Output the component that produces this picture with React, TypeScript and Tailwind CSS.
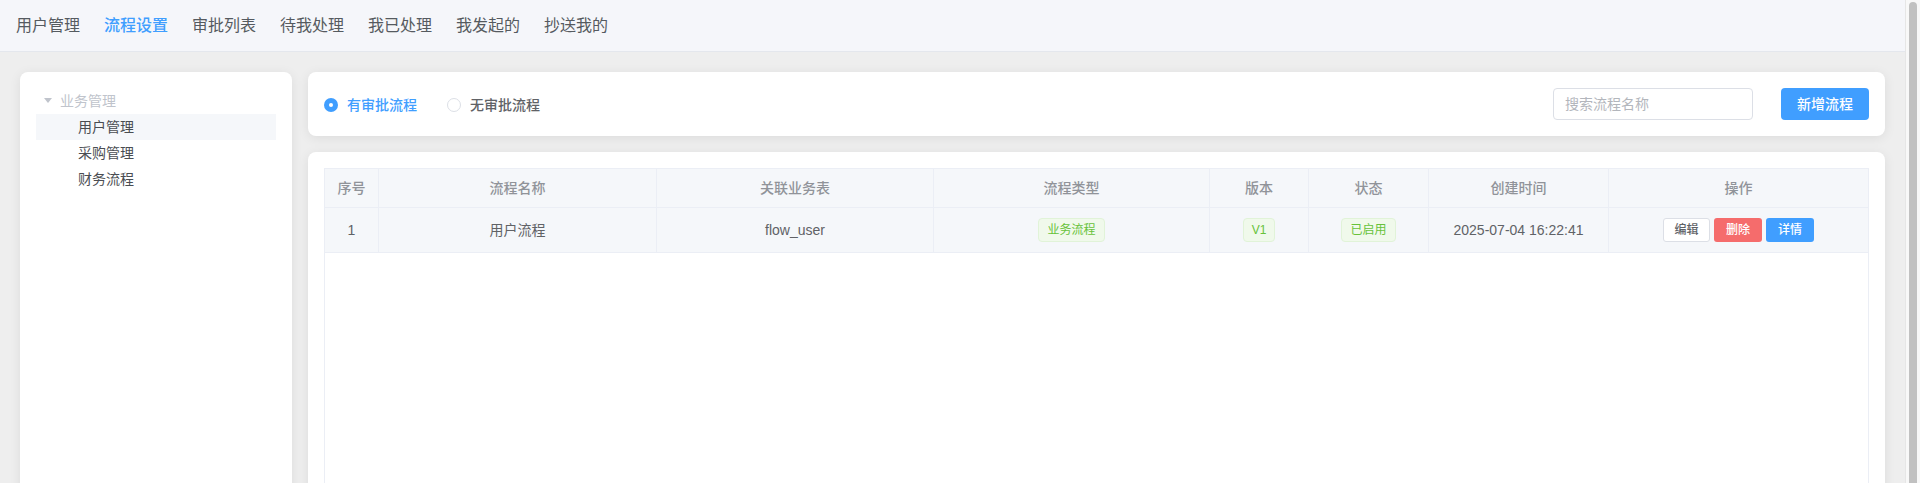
import React, { useState } from 'react';

const navItems = ['用户管理', '流程设置', '审批列表', '待我处理', '我已处理', '我发起的', '抄送我的'];

const columns = ['序号', '流程名称', '关联业务表', '流程类型', '版本', '状态', '创建时间', '操作'];

const rows = [
  { id: 1, name: '用户流程', table: 'flow_user', type: '业务流程', version: 'V1', status: '已启用', createdAt: '2025-07-04 16:22:41' },
];

const Tag: React.FC<{ children: React.ReactNode }> = ({ children }) => (
  <span className="inline-flex items-center h-[24px] px-[8px] rounded-[4px] border border-[#e1f3d8] bg-[#f0f9eb] text-[#67c23a] text-[12px] leading-none">
    {children}
  </span>
);

const Radio: React.FC<{ checked: boolean; label: string; onClick: () => void }> = ({ checked, label, onClick }) => (
  <label onClick={onClick} className="flex items-center cursor-pointer select-none">
    {checked ? (
      <span className="w-[14px] h-[14px] rounded-full bg-[#409eff] flex items-center justify-center">
        <span className="w-[4px] h-[4px] rounded-full bg-white" />
      </span>
    ) : (
      <span className="w-[14px] h-[14px] rounded-full border border-[#dcdfe6] bg-white" />
    )}
    <span className={`pl-[9px] text-[14px] font-medium leading-none ${checked ? 'text-[#409eff]' : 'text-[#606266]'}`}>{label}</span>
  </label>
);

export default function App() {
  const [mode, setMode] = useState<'with' | 'without'>('with');
  const [keyword, setKeyword] = useState('');

  return (
    <div
      className="h-screen overflow-hidden flex bg-[#eeeeee]"
      style={{ fontFamily: '"Liberation Sans", "Noto Sans CJK SC", sans-serif' }}
    >
      <div className="flex-1 flex flex-col min-w-0">
        {/* top nav */}
        <div className="h-[52px] shrink-0 bg-[#f5f6fa] border-b border-[#e4e7ed] flex items-center gap-6 pl-4 text-[16px] text-[#555a60]">
          {navItems.map((item) => (
            <span key={item} className={item === '流程设置' ? 'text-[#409eff] font-medium' : ''}>
              {item}
            </span>
          ))}
        </div>

        <div className="flex shrink-0 gap-4 p-5 h-[800px]">
          {/* tree */}
          <div className="w-[272px] shrink-0 bg-white rounded-[8px] shadow-[0_2px_12px_0_rgba(0,0,0,0.08)] p-4">
            <div className="h-[26px] flex items-center text-[14px] text-[#c0c4cc]">
              <span className="w-[24px] flex justify-center">
                <svg width="8" height="6" viewBox="0 0 8 6">
                  <path d="M0 0 L8 0 L4 5 Z" fill="#c0c4cc" />
                </svg>
              </span>
              业务管理
            </div>
            {['用户管理', '采购管理', '财务流程'].map((n, i) => (
              <div
                key={n}
                className={`h-[26px] flex items-center pl-[42px] text-[14px] text-[#4a4d52] ${i === 0 ? 'bg-[#f5f7fa]' : ''}`}
              >
                {n}
              </div>
            ))}
          </div>

          <div className="flex-1 flex flex-col gap-4 min-w-0">
            {/* filter bar */}
            <div className="h-[64px] shrink-0 bg-white rounded-[8px] shadow-[0_2px_12px_0_rgba(0,0,0,0.08)] px-4 flex items-center">
              <div className="flex items-center gap-[30px] pt-[1px]">
                <Radio checked={mode === 'with'} label="有审批流程" onClick={() => setMode('with')} />
                <Radio checked={mode === 'without'} label="无审批流程" onClick={() => setMode('without')} />
              </div>
              <div className="ml-auto flex items-center gap-[28px]">
                <input
                  value={keyword}
                  onChange={(e) => setKeyword(e.target.value)}
                  placeholder="搜索流程名称"
                  className="w-[200px] h-[32px] rounded-[4px] border border-[#dcdfe6] px-[11px] text-[14px] text-[#606266] placeholder:text-[#b3b6bc] outline-none"
                />
                <button className="w-[88px] h-[32px] rounded-[4px] bg-[#409eff] text-white text-[14px] font-medium">
                  新增流程
                </button>
              </div>
            </div>

            {/* table */}
            <div className="flex-1 bg-white rounded-[8px] shadow-[0_2px_12px_0_rgba(0,0,0,0.08)] p-4">
              <div className="h-full border border-[#ebeef5]">
                <div className="grid grid-cols-[54px_278px_277px_276px_99px_120px_180px_1fr] text-[14px]">
                  {columns.map((c, i) => (
                    <div
                      key={c}
                      className={`h-[39px] flex items-center justify-center bg-[#f5f7fa] border-b border-[#ebeef5] text-[#909399] font-medium ${i < columns.length - 1 ? 'border-r' : ''}`}
                    >
                      {c}
                    </div>
                  ))}
                  {rows.map((r) => (
                    <React.Fragment key={r.id}>
                      <div className="h-[45px] flex items-center justify-center bg-[#f5f7fa] border-b border-r border-[#ebeef5] text-[#606266]">{r.id}</div>
                      <div className="h-[45px] flex items-center justify-center bg-[#f5f7fa] border-b border-r border-[#ebeef5] text-[#606266]">{r.name}</div>
                      <div className="h-[45px] flex items-center justify-center bg-[#f5f7fa] border-b border-r border-[#ebeef5] text-[#606266]">{r.table}</div>
                      <div className="h-[45px] flex items-center justify-center bg-[#f5f7fa] border-b border-r border-[#ebeef5]">
                        <Tag>{r.type}</Tag>
                      </div>
                      <div className="h-[45px] flex items-center justify-center bg-[#f5f7fa] border-b border-r border-[#ebeef5]">
                        <Tag>{r.version}</Tag>
                      </div>
                      <div className="h-[45px] flex items-center justify-center bg-[#f5f7fa] border-b border-r border-[#ebeef5]">
                        <Tag>{r.status}</Tag>
                      </div>
                      <div className="h-[45px] flex items-center justify-center bg-[#f5f7fa] border-b border-r border-[#ebeef5] text-[#606266]">{r.createdAt}</div>
                      <div className="h-[45px] flex items-center justify-center gap-[4px] bg-[#f5f7fa] border-b border-[#ebeef5] text-[12px] font-medium">
                        <button className="w-[47px] h-[24px] rounded-[3px] border border-[#dcdfe6] bg-white text-[#606266]">编辑</button>
                        <button className="w-[48px] h-[24px] rounded-[3px] bg-[#f56c6c] text-white">删除</button>
                        <button className="w-[48px] h-[24px] rounded-[3px] bg-[#409eff] text-white">详情</button>
                      </div>
                    </React.Fragment>
                  ))}
                </div>
              </div>
            </div>
          </div>
        </div>
      </div>

      {/* scrollbar */}
      <div className="w-[15px] shrink-0 bg-[#f8f8f8] border-l border-[#e6e6e6] flex pl-[3px] pr-[3px]">
        <div className="flex-1 mt-[2px] rounded-t-[4px] bg-[#c1c1c1]" />
      </div>
    </div>
  );
}
